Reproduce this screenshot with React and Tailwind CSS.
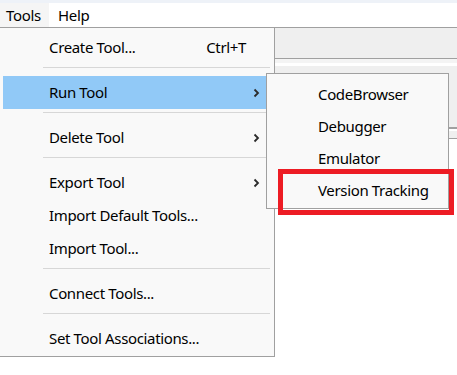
import React from "react";

const Chevron = () => (
  <svg width="7" height="10" viewBox="0 0 7 10" className="shrink-0">
    <polyline points="1.5,1.5 5,5 1.5,8.5" fill="none" stroke="#2b2b2b" strokeWidth="1.8" />
  </svg>
);

const Sep = () => <div className="mt-[3px] mb-[8px] ml-[43px] mr-[4px] h-px bg-[#d7d7d7]" />;

const Item = ({ label, shortcut, sub, active }) => (
  <div className={`flex h-[33px] items-center pr-[14px] ${active ? "ml-[3px] bg-[#91c9f7] pl-[46px]" : "pl-[49px]"}`}>
    <span className="flex-1">{label}</span>
    {shortcut && <span className="mr-[14px]">{shortcut}</span>}
    {sub && <Chevron />}
  </div>
);

export default function App() {
  const font = { fontFamily: '"Noto Sans", "Open Sans", sans-serif' };
  return (
    <div className="relative h-[375px] w-[457px] overflow-hidden bg-white text-[15px] tracking-[-0.35px] text-black" style={font}>
      {/* top strip + menubar */}
      <div className="h-[3px] bg-[#eef2f8]" />
      <div className="flex h-[24px] items-center bg-white">
        <div className="flex h-full w-[49px] items-center bg-[#f5f5f5] pl-[6px]">Tools</div>
        <div className="pl-[9px]">Help</div>
      </div>

      {/* window behind the menu */}
      <div className="border-t border-[#a0a0a0]">
        <div className="h-[31px] border-b border-[#a0a0a0] bg-[#efefef]" />
        <div className="h-[4px] bg-[#f4f4f4]" />
        <div className="h-[3px] bg-white" />
        <div className="h-[63px] border-b-2 border-[#a0a0a0] bg-[#efefef]" />
        <div className="h-[2px] bg-white" />
        <div className="h-[8px] border-b border-[#a0a0a0] bg-[#efefef]" />
      </div>

      {/* Tools menu */}
      <div className="absolute left-0 top-[27px] w-[275px] border border-l-0 border-[#a0a0a0] bg-[#f9f9f9] pt-[3px] pb-px">
        <Item label="Create Tool..." shortcut="Ctrl+T" />
        <Sep />
        <Item label="Run Tool" sub active />
        <Sep />
        <Item label="Delete Tool" sub />
        <Sep />
        <Item label="Export Tool" sub />
        <Item label="Import Default Tools..." />
        <Item label="Import Tool..." />
        <Sep />
        <Item label="Connect Tools..." />
        <Sep />
        <Item label="Set Tool Associations..." />
      </div>

      {/* Run Tool submenu */}
      <div className="absolute left-[266px] top-[73px] w-[183px] border border-[#a0a0a0] bg-[#f9f9f9] pt-[4px] pb-[2px]">
        {["CodeBrowser", "Debugger", "Emulator", "Version Tracking"].map((t) => (
          <div key={t} className="flex h-[32px] items-center pl-[51px]">{t}</div>
        ))}
      </div>

      {/* highlight box */}
      <div className="absolute left-[278px] top-[169px] h-[46px] w-[176px] border-[5px] border-[#ed1c24]" />
    </div>
  );
}
